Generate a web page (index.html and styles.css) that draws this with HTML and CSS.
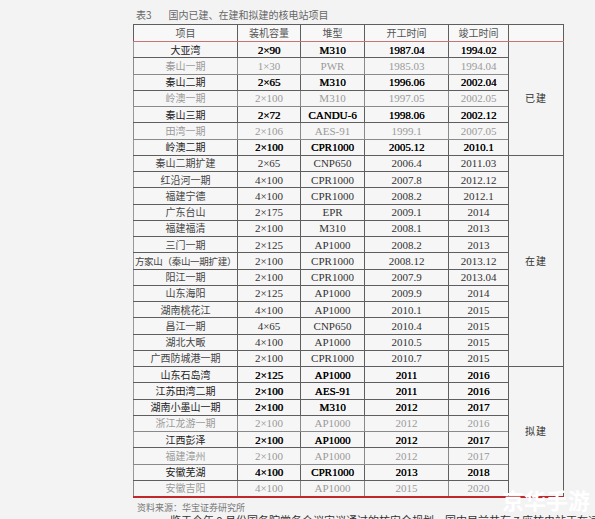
FILE: index.html
```html
<!DOCTYPE html>
<html lang="zh-CN">
<head>
    <meta charset="UTF-8">
    <title>国内已建、在建和拟建的核电站项目</title>
    <link rel="stylesheet" href="styles.css">
</head>
<body>
    <div class="page">
        <p class="caption"><span class="caption-num">表3</span>国内已建、在建和拟建的核电站项目</p>
        <table class="plants">
            <colgroup>
                <col class="c-name">
                <col class="c-cap">
                <col class="c-type">
                <col class="c-start">
                <col class="c-end">
                <col class="c-stage">
            </colgroup>
            <thead>
                <tr>
                    <th>项目</th>
                    <th>装机容量</th>
                    <th>堆型</th>
                    <th>开工时间</th>
                    <th>竣工时间</th>
                    <th></th>
                </tr>
            </thead>
            <tbody class="grp">
                <tr class="dark"><td>大亚湾</td><td>2×90</td><td>M310</td><td>1987.04</td><td>1994.02</td><td rowspan="7" class="stage">已建</td></tr>
                <tr class="faded"><td>秦山一期</td><td>1×30</td><td>PWR</td><td>1985.03</td><td>1994.04</td></tr>
                <tr class="dark"><td>秦山二期</td><td>2×65</td><td>M310</td><td>1996.06</td><td>2002.04</td></tr>
                <tr class="faded"><td>岭澳一期</td><td>2×100</td><td>M310</td><td>1997.05</td><td>2002.05</td></tr>
                <tr class="dark"><td>秦山三期</td><td>2×72</td><td>CANDU-6</td><td>1998.06</td><td>2002.12</td></tr>
                <tr class="faded"><td>田湾一期</td><td>2×106</td><td>AES-91</td><td>1999.1</td><td>2007.05</td></tr>
                <tr class="dark"><td>岭澳二期</td><td>2×100</td><td>CPR1000</td><td>2005.12</td><td>2010.1</td></tr>
            </tbody>
            <tbody class="grp">
                <tr><td>秦山二期扩建</td><td>2×65</td><td>CNP650</td><td>2006.4</td><td>2011.03</td><td rowspan="13" class="stage">在建</td></tr>
                <tr><td>红沿河一期</td><td>4×100</td><td>CPR1000</td><td>2007.8</td><td>2012.12</td></tr>
                <tr><td>福建宁德</td><td>4×100</td><td>CPR1000</td><td>2008.2</td><td>2012.1</td></tr>
                <tr><td>广东台山</td><td>2×175</td><td>EPR</td><td>2009.1</td><td>2014</td></tr>
                <tr><td>福建福清</td><td>2×100</td><td>M310</td><td>2008.1</td><td>2013</td></tr>
                <tr><td>三门一期</td><td>2×125</td><td>AP1000</td><td>2008.2</td><td>2013</td></tr>
                <tr><td class="tight">方家山（秦山一期扩建）</td><td>2×100</td><td>CPR1000</td><td>2008.12</td><td>2013.12</td></tr>
                <tr><td>阳江一期</td><td>2×100</td><td>CPR1000</td><td>2007.9</td><td>2013.04</td></tr>
                <tr><td>山东海阳</td><td>2×125</td><td>AP1000</td><td>2009.9</td><td>2014</td></tr>
                <tr><td>湖南桃花江</td><td>4×100</td><td>AP1000</td><td>2010.1</td><td>2015</td></tr>
                <tr><td>昌江一期</td><td>4×65</td><td>CNP650</td><td>2010.4</td><td>2015</td></tr>
                <tr><td>湖北大畈</td><td>4×100</td><td>AP1000</td><td>2010.5</td><td>2015</td></tr>
                <tr><td>广西防城港一期</td><td>2×100</td><td>CPR1000</td><td>2010.7</td><td>2015</td></tr>
            </tbody>
            <tbody class="grp last">
                <tr class="dark"><td>山东石岛湾</td><td>2×125</td><td>AP1000</td><td>2011</td><td>2016</td><td rowspan="8" class="stage">拟建</td></tr>
                <tr class="dark"><td>江苏田湾二期</td><td>2×100</td><td>AES-91</td><td>2011</td><td>2016</td></tr>
                <tr class="dark"><td>湖南小墨山一期</td><td>2×100</td><td>M310</td><td>2012</td><td>2017</td></tr>
                <tr class="faded"><td>浙江龙游一期</td><td>2×100</td><td>AP1000</td><td>2012</td><td>2016</td></tr>
                <tr class="dark"><td>江西彭泽</td><td>2×100</td><td>AP1000</td><td>2012</td><td>2017</td></tr>
                <tr class="faded"><td>福建漳州</td><td>2×100</td><td>AP1000</td><td>2012</td><td>2017</td></tr>
                <tr class="dark"><td>安徽芜湖</td><td>4×100</td><td>CPR1000</td><td>2013</td><td>2018</td></tr>
                <tr class="faded"><td>安徽吉阳</td><td>4×100</td><td>AP1000</td><td>2015</td><td>2020</td></tr>
            </tbody>
        </table>
        <p class="source">资料来源：华宝证券研究所</p>
        <p class="body-text">鉴于今年 9 月份国务院常务会议审议通过的核安全规划，国内目前共有 7 座核电站正在运行</p>
        <div class="watermark">京华手游</div>
    </div>
</body>
</html>
```

FILE: styles.css
```css
html, body{
    margin: 0;
    padding: 0;
    background: #f3f3f3;
}
.page{
    position: relative;
    width: 595px;
    height: 519px;
    overflow: hidden;
    padding: 8px 0 0 133px;
    box-sizing: border-box;
    font-family: "Liberation Serif", "Noto Sans CJK SC", serif;
    color: #333;
}
.caption{
    margin: 0 0 0 3px;
    height: 16px;
    line-height: 14px;
    font-size: 10px;
    color: #666;
    font-family: "Noto Sans CJK SC", sans-serif;
}
.caption-num{
    margin-right: 17px;
}
.plants{
    border-collapse: collapse;
    table-layout: fixed;
    width: 430px;
    font-size: 11px;
    background: #f6f6f6;
    border-top: 1px solid #a88;
    border-left: 1px solid #999;
    border-right: 1px solid #555;
}
.c-name{ width: 104px; }
.c-cap{ width: 63px; }
.c-type{ width: 64px; }
.c-start{ width: 84px; }
.c-end{ width: 60px; }
.c-stage{ width: 55px; }

.plants th,
.plants td{
    padding: 0;
    text-align: center;
    white-space: nowrap;
    line-height: 14px;
    border: 1px solid #5e5e5e;
}
.plants th{
    height: 16px;
    font-weight: normal;
    color: #555;
    font-family: "Noto Sans CJK SC", sans-serif;
    font-size: 10px;
    border-bottom: 1px solid #c47474;
    background: #f8f8f8;
}
.plants tr{
    height: 16.25px;
}
.plants td:first-child{
    font-family: "Noto Sans CJK SC", sans-serif;
    font-size: 10px;
    color: #444;
    border-left-color: #999;
}
.plants td.tight{
    font-size: 9.5px;
    letter-spacing: -0.3px;
}
.plants .grp{
    border-bottom: 1px solid #c26a6a;
}
.plants .grp.last{
    border-bottom: 2px solid #c0282c;
}
.plants .dark td{
    color: #000;
    text-shadow: 0.3px 0 0 #000;
}
.plants .dark td:first-child{
    color: #222;
    text-shadow: none;
}
.plants .faded td,
.plants .faded td:first-child{
    color: #9a9a9a;
    border-color: #8a8a8a;
}
.plants td.stage{
    color: #333;
    text-shadow: none;
    font-family: "Noto Sans CJK SC", sans-serif;
    font-size: 10px;
    letter-spacing: 1px;
    background: #f4f4f4;
    border-color: #5e5e5e;
}
.source{
    margin: 4px 0 0 4px;
    font-size: 9px;
    line-height: 11px;
    color: #777;
    font-family: "Noto Sans CJK SC", sans-serif;
}
.body-text{
    margin: 2px 0 0 37px;
    font-size: 11px;
    line-height: 11px;
    color: #333;
    font-family: "Noto Sans CJK SC", sans-serif;
    white-space: nowrap;
}
.watermark{
    position: absolute;
    right: 5px;
    bottom: 7px;
    font-family: "Noto Sans CJK SC", sans-serif;
    font-weight: bold;
    font-size: 22px;
    line-height: 26px;
    color: #fff;
    letter-spacing: 0;
}
```
